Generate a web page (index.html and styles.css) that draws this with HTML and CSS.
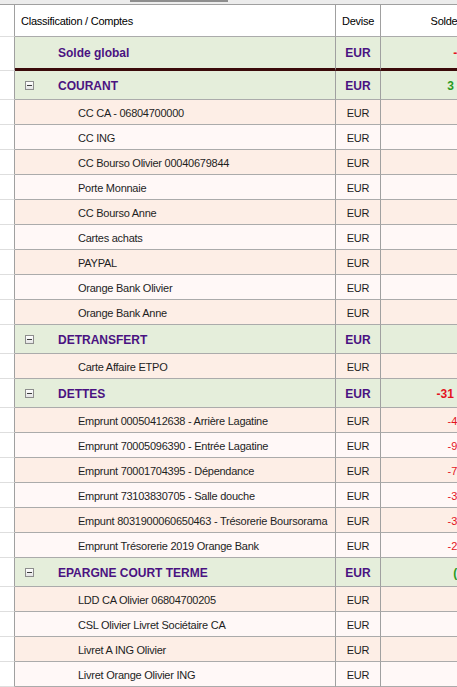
FILE: index.html
```html
<!DOCTYPE html>
<html lang="fr">
<head>
<meta charset="utf-8">
<title>Comptes</title>
<link rel="stylesheet" href="styles.css">
</head>
<body>
<div class="strip"><div class="thumb"></div></div>
<div class="grid">
  <div class="row head"><div class="gut"></div><div class="name">Classification / Comptes</div><div class="dev">Devise</div><div class="sol">Solde</div></div>
  <div class="row total"><div class="gut"></div><div class="name">Solde global</div><div class="dev">EUR</div><div class="sol neg">-893,48</div></div>

  <div class="row group"><div class="gut"></div><div class="name"><span class="tog"></span>COURANT</div><div class="dev">EUR</div><div class="sol pos">3 412,87</div></div>
  <div class="row odd"><div class="gut"></div><div class="name">CC CA - 06804700000</div><div class="dev">EUR</div><div class="sol"></div></div>
  <div class="row even"><div class="gut"></div><div class="name">CC ING</div><div class="dev">EUR</div><div class="sol"></div></div>
  <div class="row odd"><div class="gut"></div><div class="name">CC Bourso Olivier 00040679844</div><div class="dev">EUR</div><div class="sol"></div></div>
  <div class="row even"><div class="gut"></div><div class="name">Porte Monnaie</div><div class="dev">EUR</div><div class="sol"></div></div>
  <div class="row odd"><div class="gut"></div><div class="name">CC Bourso Anne</div><div class="dev">EUR</div><div class="sol"></div></div>
  <div class="row even"><div class="gut"></div><div class="name">Cartes achats</div><div class="dev">EUR</div><div class="sol"></div></div>
  <div class="row odd"><div class="gut"></div><div class="name">PAYPAL</div><div class="dev">EUR</div><div class="sol"></div></div>
  <div class="row even"><div class="gut"></div><div class="name">Orange Bank Olivier</div><div class="dev">EUR</div><div class="sol"></div></div>
  <div class="row odd"><div class="gut"></div><div class="name">Orange Bank Anne</div><div class="dev">EUR</div><div class="sol"></div></div>

  <div class="row group"><div class="gut"></div><div class="name"><span class="tog"></span>DETRANSFERT</div><div class="dev">EUR</div><div class="sol"></div></div>
  <div class="row odd"><div class="gut"></div><div class="name">Carte Affaire ETPO</div><div class="dev">EUR</div><div class="sol"></div></div>

  <div class="row group"><div class="gut"></div><div class="name"><span class="tog"></span>DETTES</div><div class="dev">EUR</div><div class="sol neg">-31 024,56</div></div>
  <div class="row odd"><div class="gut"></div><div class="name">Emprunt 00050412638 - Arrière Lagatine</div><div class="dev">EUR</div><div class="sol neg">-4 512,30</div></div>
  <div class="row even"><div class="gut"></div><div class="name">Emprunt 70005096390 - Entrée Lagatine</div><div class="dev">EUR</div><div class="sol neg">-9 034,12</div></div>
  <div class="row odd"><div class="gut"></div><div class="name">Emprunt 70001704395 - Dépendance</div><div class="dev">EUR</div><div class="sol neg">-7 218,44</div></div>
  <div class="row even"><div class="gut"></div><div class="name">Emprunt 73103830705 - Salle douche</div><div class="dev">EUR</div><div class="sol neg">-3 106,09</div></div>
  <div class="row odd"><div class="gut"></div><div class="name">Empunt 8031900060650463 - Trésorerie Boursorama</div><div class="dev">EUR</div><div class="sol neg">-3 940,75</div></div>
  <div class="row even"><div class="gut"></div><div class="name">Emprunt Trésorerie 2019 Orange Bank</div><div class="dev">EUR</div><div class="sol neg">-2 212,86</div></div>

  <div class="row group"><div class="gut"></div><div class="name"><span class="tog"></span>EPARGNE COURT TERME</div><div class="dev">EUR</div><div class="sol pos">(940,18</div></div>
  <div class="row odd"><div class="gut"></div><div class="name">LDD CA Olivier 06804700205</div><div class="dev">EUR</div><div class="sol"></div></div>
  <div class="row even"><div class="gut"></div><div class="name">CSL Olivier Livret Sociétaire CA</div><div class="dev">EUR</div><div class="sol"></div></div>
  <div class="row odd"><div class="gut"></div><div class="name">Livret A ING Olivier</div><div class="dev">EUR</div><div class="sol"></div></div>
  <div class="row even"><div class="gut"></div><div class="name">Livret Orange Olivier ING</div><div class="dev">EUR</div><div class="sol"></div></div>
</div>
</body>
</html>
```

FILE: styles.css
```css
html, body {
  margin: 0;
  padding: 0;
}
body {
  width: 457px;
  height: 687px;
  overflow: hidden;
  background: #f0f0f0;
  font-family: "Liberation Sans", Arial, sans-serif;
  font-size: 11px;
  letter-spacing: -0.25px;
  color: #1e1e1e;
}
.strip {
  display: flex;
  height: 4px;
  background: #ececec;
}
.thumb {
  margin-left: 130px;
  width: 98px;
  height: 2px;
  background: #8e8e8e;
}
.grid {
  width: 507px;
  border-top: 1px solid #a0a0a0;
  background: #fff;
}
.row {
  display: flex;
  height: 25px;
}
.row > div {
  box-sizing: border-box;
  height: 100%;
  display: flex;
  align-items: center;
  padding-top: 1px;
  white-space: nowrap;
  overflow: hidden;
  border-bottom: 1px solid #ababab;
}
.row > .gut {
  width: 15px;
  flex: none;
  background: #fff;
  border-right: 1px solid #a0a0a0;
  border-bottom-color: #dedede;
}
.name {
  width: 321px;
  flex: none;
  padding-left: 63px;
  border-right: 1px solid #a0a0a0;
}
.dev {
  width: 45px;
  flex: none;
  justify-content: center;
  border-right: 1px solid #a0a0a0;
}
.row > .sol {
  width: 126px;
  flex: none;
  justify-content: flex-end;
  padding-right: 13px;
  letter-spacing: 0;
}
.odd > div:not(.gut) {
  background: #fdeee6;
}
.even > div:not(.gut) {
  background: #fff8f7;
}

/* header */
.head {
  height: 32px;
  color: #000;
}
.head > div:not(.gut) {
  background: #fff;
}
.head .name {
  padding-left: 6px;
}
.row.head > .sol {
  justify-content: center;
  padding-right: 0;
  letter-spacing: -0.25px;
}

/* total & groups */
.total {
  height: 34px;
}
.total > div:not(.gut) {
  background: #e5eedb;
  border-bottom: 3px solid #3b0a0a;
}
.total .name {
  padding-left: 43px;
}
.group {
  height: 29px;
}
.group > div:not(.gut) {
  background: #e5eedb;
}
.group .name {
  padding-left: 10px;
}
.total .name,
.total .dev,
.group .name,
.group .dev {
  font-weight: bold;
  font-size: 12px;
  letter-spacing: 0;
  color: #4a1281;
}
.total .sol,
.group .sol {
  font-weight: bold;
  font-size: 12px;
}
.tog {
  box-sizing: border-box;
  width: 9px;
  height: 9px;
  margin-right: 24px;
  border: 1px solid #8d8d8d;
  background: linear-gradient(#ffffff, #e4e4e4);
  display: flex;
  align-items: center;
  justify-content: center;
  flex: none;
}
.tog::before {
  content: "";
  width: 5px;
  height: 1px;
  background: #3c3c3c;
}
.neg {
  color: #e4141e;
}
.pos {
  color: #2a9a22;
}
```
